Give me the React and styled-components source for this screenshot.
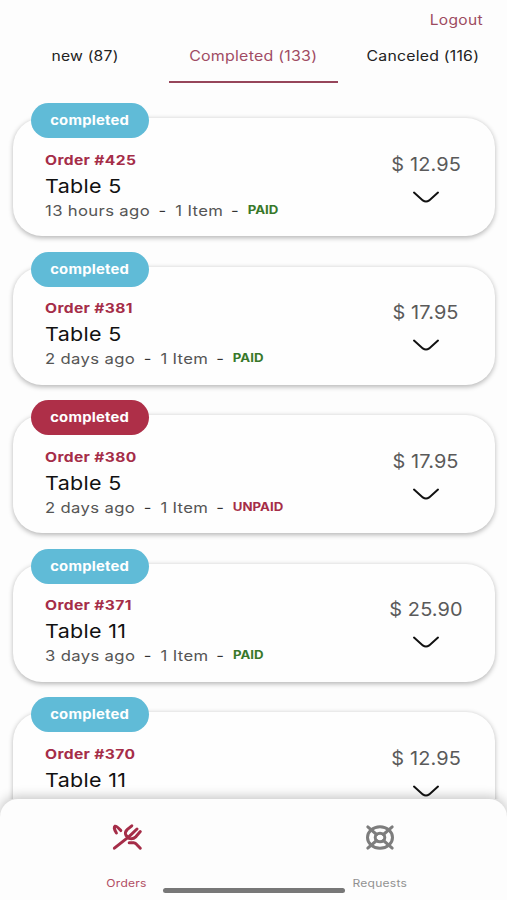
import React, { useState } from 'react';
import styled, { createGlobalStyle } from 'styled-components';

const tabs = [
  { id: 'new', label: 'new (87)', stretch: 1.12 },
  { id: 'completed', label: 'Completed (133)', stretch: 1.14 },
  { id: 'canceled', label: 'Canceled (116)', stretch: 1.13 },
];

const orders = [
  { id: 425, table: 5, time: '13 hours ago', price: '12.95', paid: true },
  { id: 381, table: 5, time: '2 days ago', price: '17.95', paid: true },
  { id: 380, table: 5, time: '2 days ago', price: '17.95', paid: false },
  { id: 371, table: 11, time: '3 days ago', price: '25.90', paid: true },
  { id: 370, table: 11, time: '3 days ago', price: '12.95', paid: true },
];

function OrderCard({ order }) {
  return (
    <Card>
      <Badge $paid={order.paid}>
        <BadgeText>completed</BadgeText>
      </Badge>
      <Details>
        <OrderNumber>Order #{order.id}</OrderNumber>
        <TableName>Table {order.table}</TableName>
        <Meta>
          <span>{order.time}</span>
          <Dash>-</Dash>
          <Items>1 Item</Items>
          <Dash>-</Dash>
          <Payment $paid={order.paid}>{order.paid ? 'PAID' : 'UNPAID'}</Payment>
        </Meta>
      </Details>
      <Summary>
        <Price>$ {order.price}</Price>
        <Chevron viewBox="0 0 28 14">
          <path d="M2 1.6 L10.8 9.4 Q14 11.6 17.2 9.4 L26 1.6" />
        </Chevron>
      </Summary>
    </Card>
  );
}

function App() {
  const [active, setActive] = useState('completed');

  return (
    <Screen>
      <GlobalStyle />
      <TopBar>
        <Logout>Logout</Logout>
      </TopBar>
      <Tabs>
        {tabs.map((tab) => (
          <Tab
            key={tab.id}
            $active={tab.id === active}
            onClick={() => setActive(tab.id)}
          >
            <TabLabel $stretch={tab.stretch}>{tab.label}</TabLabel>
          </Tab>
        ))}
      </Tabs>
      <List>
        {orders.map((order) => (
          <OrderCard key={order.id} order={order} />
        ))}
      </List>
      <BottomNav>
        <NavItem $active>
          <NavIcon viewBox="0 0 32 30">
            <path d="M5.4 10 C3.2 6.6 3 4 4 3.2 C5.5 2.5 7 4.5 9.8 7.6" />
            <path d="M3.4 25.2 L18 13.6 L26 6" />
            <path d="M20.8 2.8 L16.4 6.4 C14.2 8.4 14 10.4 15 12.4 L18 15.4 C20.5 16.2 23 15.6 25 13.6 L29.3 8.6" />
            <path d="M18.2 19.8 H22.8 C24.6 19.8 25.4 21 26.4 22.2 L29.3 25.2" />
          </NavIcon>
          <NavLabel>Orders</NavLabel>
        </NavItem>
        <NavItem>
          <NavIcon viewBox="0 0 32 30">
            <ellipse cx="16" cy="14.5" rx="12.5" ry="10.8" />
            <ellipse cx="16" cy="14.5" rx="4.8" ry="4.3" />
            <path d="M3.8 3.9 L12.6 11.5 M28.2 3.9 L19.4 11.5 M3.8 25.1 L12.6 17.5 M28.2 25.1 L19.4 17.5" />
          </NavIcon>
          <NavLabel>Requests</NavLabel>
        </NavItem>
        <HomeIndicator />
      </BottomNav>
    </Screen>
  );
}

const GlobalStyle = createGlobalStyle`
  * {
    box-sizing: border-box;
  }
  body {
    margin: 0;
    background: #fdfdfd;
    font-family: Inter, 'Open Sans', sans-serif;
  }
`;

const Screen = styled.div`
  display: flex;
  flex-direction: column;
  height: 900px;
  overflow: hidden;
  background: #fdfdfd;
`;

const TopBar = styled.header`
  display: flex;
  justify-content: flex-end;
  padding: 10px 24px 0 0;
  height: 30px;
`;

const Logout = styled.a`
  color: #9c4a5f;
  font-size: 14px;
  line-height: 20px;
  letter-spacing: 0.3px;
  transform: scaleX(1.11);
  transform-origin: right;
`;

const Tabs = styled.nav`
  display: grid;
  grid-template-columns: 169px 169px 169px;
  height: 53px;
`;

const Tab = styled.button`
  padding: 0;
  border: none;
  border-bottom: 2px solid ${(props) => (props.$active ? '#96455a' : 'transparent')};
  background: none;
  color: ${(props) => (props.$active ? '#a04c64' : '#222')};
  font-family: inherit;
  font-size: 14px;
  letter-spacing: 0.2px;
  cursor: pointer;
`;

const TabLabel = styled.span`
  display: inline-block;
  transform: scaleX(${(props) => props.$stretch});
`;

const List = styled.main`
  display: flex;
  flex-direction: column;
  flex: 1;
  gap: 30.5px;
  min-height: 0;
  padding: 35px 12px 0 13px;
  overflow: hidden;
`;

const Card = styled.article`
  position: relative;
  display: flex;
  flex-shrink: 0;
  justify-content: space-between;
  height: 118px;
  padding: 31.5px 30px 0 32px;
  border-radius: 29px;
  background: #fefefe;
  box-shadow: 0 1.5px 5px rgba(0, 0, 0, 0.28);
`;

const Badge = styled.span`
  position: absolute; // Sits over the top edge of the card
  top: -15px;
  left: 18px;
  width: 118px;
  height: 35px;
  border-radius: 18px;
  background: ${(props) => (props.$paid ? '#60bbd7' : '#ae2f48')};
  color: #fff;
  text-align: center;
`;

const BadgeText = styled.span`
  display: inline-block;
  font-size: 13px;
  font-weight: 700;
  line-height: 35px;
  letter-spacing: 0.2px;
  transform: scaleX(1.14);
`;

const Details = styled.div`
  display: flex;
  flex-direction: column;
`;

const OrderNumber = styled.strong`
  color: #a52d48;
  font-size: 13px;
  font-weight: 700;
  line-height: 20px;
  letter-spacing: 0.3px;
  transform: scaleX(1.2);
  transform-origin: left;
`;

const TableName = styled.h2`
  margin: 0;
  color: #111;
  font-size: 19px;
  font-weight: 400;
  line-height: 34px;
  letter-spacing: 0.3px;
  transform: scaleX(1.13);
  transform-origin: left;
`;

const Meta = styled.div`
  display: flex;
  align-items: center;
  color: #555;
  font-size: 14.5px;
  line-height: 13px;
  letter-spacing: 0.3px;
  white-space: nowrap;
  transform: scaleX(1.15);
  transform-origin: left;
`;

const Dash = styled.span`
  width: 22px;
  color: #333;
  text-align: center;
`;

const Items = styled.span`
  width: 41px;
`;

const Payment = styled.strong`
  color: ${(props) => (props.$paid ? '#38782a' : '#a52d48')};
  font-size: 11.5px;
  font-weight: 700;
  letter-spacing: 0;
`;

const Summary = styled.div`
  display: flex;
  flex-direction: column;
  align-items: center;
  width: 78px;
`;

const Price = styled.span`
  color: #5a5a5a;
  font-size: 19px;
  line-height: 29px;
  letter-spacing: 0.1px;
  white-space: nowrap;
  transform: scaleX(1.05);
`;

const Chevron = styled.svg`
  width: 28px;
  height: 14px;
  margin-top: 12px;
  fill: none;
  stroke: #111;
  stroke-width: 2;
  stroke-linecap: round;
`;

const BottomNav = styled.footer`
  position: relative;
  display: grid;
  grid-template-columns: 1fr 1fr;
  flex-shrink: 0;
  height: 101px;
  border-radius: 18px 18px 0 0;
  background: #fdfdfd;
  box-shadow: 0 -2px 12px rgba(0, 0, 0, 0.24);
`;

const NavItem = styled.div`
  display: flex;
  flex-direction: column;
  align-items: center;
  padding-top: 24px;
  color: ${(props) => (props.$active ? '#a52d48' : '#7d7d7d')};
`;

const NavIcon = styled.svg`
  width: 32px;
  height: 30px;
  fill: none;
  stroke: currentColor;
  stroke-width: 3;
  stroke-linecap: round;
  stroke-linejoin: round;
`;

const NavLabel = styled.span`
  margin-top: 23px;
  font-size: 10.5px;
  line-height: 16px;
  letter-spacing: 0.2px;
  opacity: 0.85;
  transform: scaleX(1.15);
`;

const HomeIndicator = styled.div`
  position: absolute;
  bottom: 7px;
  left: 163px;
  width: 182px;
  height: 5px;
  border-radius: 3px;
  background: #777;
`;

export default App;
